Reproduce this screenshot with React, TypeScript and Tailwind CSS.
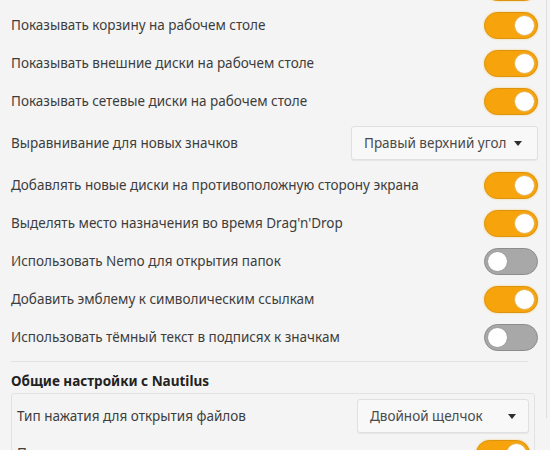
import React from "react";

type Row =
  | { kind: "toggle"; label: string; on: boolean }
  | { kind: "select"; label: string; value: string };

// first row sits mostly above the window, only the toggle's bottom edge shows
const desktopRows: Row[] = [
  { kind: "toggle", label: "", on: true },
  { kind: "toggle", label: "Показывать корзину на рабочем столе", on: true },
  { kind: "toggle", label: "Показывать внешние диски на рабочем столе", on: true },
  { kind: "toggle", label: "Показывать сетевые диски на рабочем столе", on: true },
  { kind: "select", label: "Выравнивание для новых значков", value: "Правый верхний угол" },
  { kind: "toggle", label: "Добавлять новые диски на противоположную сторону экрана", on: true },
  { kind: "toggle", label: "Выделять место назначения во время Drag'n'Drop", on: true },
  { kind: "toggle", label: "Использовать Nemo для открытия папок", on: false },
  { kind: "toggle", label: "Добавить эмблему к символическим ссылкам", on: true },
  { kind: "toggle", label: "Использовать тёмный текст в подписях к значкам", on: false },
];

function Toggle({ on }: { on: boolean }) {
  return (
    <div
      className={
        on
          ? "relative w-[54px] h-[27px] rounded-full bg-[#f7a40c] border border-[#dc9410] shadow-[0_0_2px_rgba(245,170,20,0.6)]"
          : "relative w-[54px] h-[27px] rounded-full bg-[#a8a8a8] border border-[#8c8c8c]"
      }
    >
      <div
        className={
          on
            ? "absolute top-[2px] right-[2px] w-[21px] h-[21px] rounded-full bg-white border border-[#e7b04a]"
            : "absolute top-[2px] left-[2px] w-[21px] h-[21px] rounded-full bg-white border border-[#9a9a9a]"
        }
      />
    </div>
  );
}

function Caret() {
  return (
    <svg width="8" height="5" viewBox="0 0 8 5" className="shrink-0">
      <path d="M0 0 L8 0 L4 5 Z" fill="#2e2e2e" />
    </svg>
  );
}

function Select({ value, width, spread }: { value: string; width: string; spread?: boolean }) {
  return (
    <div
      className={`${width} h-[34px] flex items-center ${spread ? "justify-between" : "gap-2"} px-3 rounded-[3px] border border-[#e0e0e0] bg-[#f8f8f8] shadow-[0_1px_1px_rgba(0,0,0,0.06)] text-[#4a4a4a]`}
    >
      <span>{value}</span>
      <Caret />
    </div>
  );
}

export default function App() {
  return (
    <div
      className="w-[550px] h-[450px] overflow-hidden bg-[#f4f4f4] text-[13.5px] text-[#3d3d3d]"
      style={{ fontFamily: '"Noto Sans", "Open Sans", sans-serif' }}
    >
      <div className="w-[547px] h-full border-r border-[#dedede] pl-[11px] pr-[8px] -mt-[32px]">
        {desktopRows.map((row, i) =>
          row.kind === "toggle" ? (
            <div key={i} className="h-[38px] flex items-center justify-between">
              <span>{row.label}</span>
              <Toggle on={row.on} />
            </div>
          ) : (
            <div key={i} className="h-[46px] flex items-center justify-between">
              <span>{row.label}</span>
              <Select value={row.value} width="w-[187px]" />
            </div>
          )
        )}

        <div className="mt-[5px] border-t border-[#e2e2e2] mr-[10px]" />

        <div className="pt-[9px] font-bold text-[#222]">Общие настройки с Nautilus</div>

        <div className="mt-[2px] mr-[3px] border border-[#e2e2e2] rounded-[3px] pl-[5px] pr-[4px] pt-[4px]">
          <div className="h-[36px] flex items-center justify-between pr-[1px]">
            <span>Тип нажатия для открытия файлов</span>
            <Select value="Двойной щелчок" width="w-[172px]" spread />
          </div>
          <div className="h-[38px] flex items-center justify-between">
            <span>Показывать количество элементов в папках</span>
            <Toggle on={true} />
          </div>
        </div>
      </div>
    </div>
  );
}
